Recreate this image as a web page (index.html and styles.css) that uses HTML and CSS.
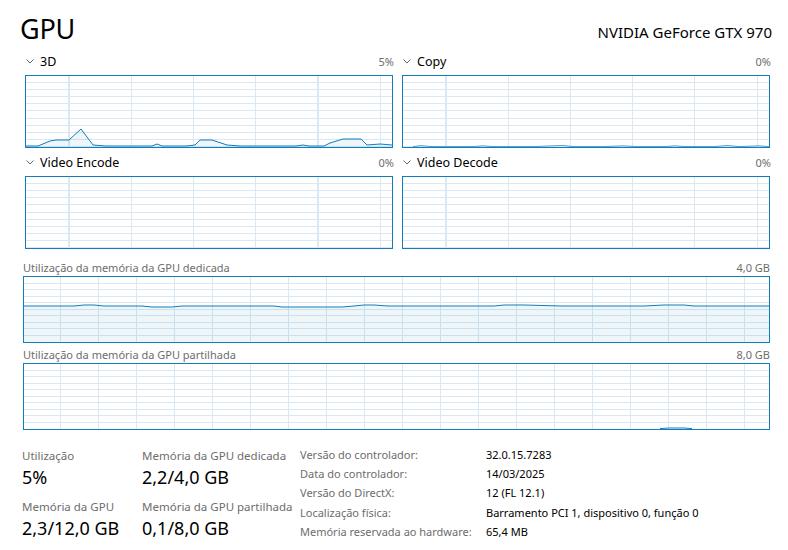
FILE: index.html
```html
<!DOCTYPE html>
<html lang="pt">
<head>
<meta charset="utf-8">
<title>GPU</title>
<link rel="stylesheet" href="styles.css">
</head>
<body>
<div class="page">
  <header class="header">
    <h1 class="title">GPU</h1>
    <div class="device">NVIDIA GeForce GTX 970</div>
  </header>

  <section class="engines">
    <div class="engine">
      <div class="engine-head">
        <span class="eng-name"><svg class="chev" viewBox="0 0 8 5" width="8" height="5"><path d="M0.5 0.5 L4 4 L7.5 0.5" fill="none" stroke="#666" stroke-width="1"/></svg>3D</span>
        <span class="pct">5%</span>
      </div>
      <div class="graph small">
        <svg class="plot" viewBox="0 0 366 71" preserveAspectRatio="none">
          <polygon class="fill" points="0,71 0,70 12,70 24,65 30,64 43,64 55,53 67,69 80,70 126,70 131,68 136,70 160,70 169,69 174,64 186,64 201,69 214,70 270,70 277,69 283,70 298,70 304,67 317,63 335,63 341,69 354,68 366,69 366,71"/>
          <polyline class="line" points="0,70 12,70 24,65 30,64 43,64 55,53 67,69 80,70 126,70 131,68 136,70 160,70 169,69 174,64 186,64 201,69 214,70 270,70 277,69 283,70 298,70 304,67 317,63 335,63 341,69 354,68 366,69"/>
        </svg>
      </div>
    </div>
    <div class="engine">
      <div class="engine-head">
        <span class="eng-name"><svg class="chev" viewBox="0 0 8 5" width="8" height="5"><path d="M0.5 0.5 L4 4 L7.5 0.5" fill="none" stroke="#666" stroke-width="1"/></svg>Copy</span>
        <span class="pct">0%</span>
      </div>
      <div class="graph small">
        <svg class="plot" viewBox="0 0 366 71" preserveAspectRatio="none">
          <polyline class="line thin" points="10,70.6 18,69.6 28,70.6 70,70.6 80,69.8 90,70.6 130,70.6 160,69.4 170,70.6 200,70.6 220,69.8 234,70.6 262,70.6 272,69.8 282,70.6 312,70.6 324,69.4 336,70.6 356,69.8 366,70.6"/>
        </svg>
      </div>
    </div>
    <div class="engine">
      <div class="engine-head">
        <span class="eng-name"><svg class="chev" viewBox="0 0 8 5" width="8" height="5"><path d="M0.5 0.5 L4 4 L7.5 0.5" fill="none" stroke="#666" stroke-width="1"/></svg>Video Encode</span>
        <span class="pct">0%</span>
      </div>
      <div class="graph small"></div>
    </div>
    <div class="engine">
      <div class="engine-head">
        <span class="eng-name"><svg class="chev" viewBox="0 0 8 5" width="8" height="5"><path d="M0.5 0.5 L4 4 L7.5 0.5" fill="none" stroke="#666" stroke-width="1"/></svg>Video Decode</span>
        <span class="pct">0%</span>
      </div>
      <div class="graph small"></div>
    </div>
  </section>

  <section class="memory">
    <div class="mem-head">
      <span>Utilização da memória da GPU dedicada</span>
      <span>4,0 GB</span>
    </div>
    <div class="graph wide">
      <svg class="plot" viewBox="0 0 745 65" preserveAspectRatio="none">
        <polygon class="fill" points="0,65 0,29 50,29 60,28 70,28 80,29 118,29 128,30 148,30 158,29 250,29 258,30 300,30 318,30 330,29 340,28 350,28 364,29 470,29 480,28 500,28 538,29 560,29 620,29 640,28 660,28 670,29 745,29 745,65"/>
        <polyline class="line" points="0,29 50,29 60,28 70,28 80,29 118,29 128,30 148,30 158,29 250,29 258,30 300,30 318,30 330,29 340,28 350,28 364,29 470,29 480,28 500,28 538,29 560,29 620,29 640,28 660,28 670,29 745,29"/>
      </svg>
    </div>
    <div class="mem-head">
      <span>Utilização da memória da GPU partilhada</span>
      <span>8,0 GB</span>
    </div>
    <div class="graph wide">
      <svg class="plot" viewBox="0 0 745 65" preserveAspectRatio="none">
        <polyline class="line" points="636,64.6 645,64 660,64 668,64.6"/>
      </svg>
    </div>
  </section>

  <section class="stats">
    <div class="kpis">
      <div class="kpi">
        <div class="k-label">Utilização</div>
        <div class="k-value">5%</div>
      </div>
      <div class="kpi">
        <div class="k-label">Memória da GPU dedicada</div>
        <div class="k-value">2,2/4,0 GB</div>
      </div>
      <div class="kpi">
        <div class="k-label">Memória da GPU</div>
        <div class="k-value">2,3/12,0 GB</div>
      </div>
      <div class="kpi">
        <div class="k-label">Memória da GPU partilhada</div>
        <div class="k-value">0,1/8,0 GB</div>
      </div>
    </div>
    <dl class="props">
      <dt>Versão do controlador:</dt><dd>32.0.15.7283</dd>
      <dt>Data do controlador:</dt><dd>14/03/2025</dd>
      <dt>Versão do DirectX:</dt><dd>12 (FL 12.1)</dd>
      <dt>Localização física:</dt><dd>Barramento PCI 1, dispositivo 0, função 0</dd>
      <dt>Memória reservada ao hardware:</dt><dd>65,4 MB</dd>
    </dl>
  </section>
</div>
</body>
</html>
```

FILE: styles.css
```css
html, body {
  margin: 0;
  padding: 0;
  background: #ffffff;
}

body {
  font-family: "Noto Sans", "Open Sans", "DejaVu Sans", sans-serif;
  color: #000;
  width: 788px;
  height: 550px;
  overflow: hidden;
}

.page {
  padding: 0 18px 0 20px;
}

.header {
  display: flex;
  justify-content: space-between;
  align-items: flex-end;
  height: 44px;
}

.title {
  margin: 0;
  font-size: 27px;
  font-weight: 400;
  line-height: 30px;
  letter-spacing: -0.2px;
}

.device {
  font-size: 15px;
  line-height: 20px;
  margin-bottom: 2px;
  margin-right: -2px;
}

.engines {
  display: grid;
  grid-template-columns: 368px 368px;
  column-gap: 9px;
  row-gap: 2px;
  margin-left: 5px;
  margin-top: 5px;
}

.engine-head {
  display: flex;
  justify-content: space-between;
  align-items: flex-start;
  height: 23px;
  line-height: 20px;
  margin-top: 3px;
}

.eng-name {
  display: flex;
  align-items: center;
  height: 20px;
  font-size: 12.5px;
  margin-left: 1px;
}

.chev {
  margin-right: 6px;
  margin-top: -2px;
}

.pct {
  font-size: 11px;
  color: #6d6d6d;
  margin-right: -1px;
}

.graph {
  position: relative;
  border: 1px solid #117dbb;
  box-sizing: border-box;
  background-color: #fff;
}

.graph.small {
  height: 73px;
  background-image:
    linear-gradient(to right, transparent 42.5px, #d9e8f3 42.5px 44px, transparent 44px 104.7px, #d9e8f3 104.7px 106.2px, transparent 106.2px 166.7px, #d9e8f3 166.7px 168.2px, transparent 168.2px 228.8px, #d9e8f3 228.8px 230.3px, transparent 230.3px 291px, #d9e8f3 291px 292.5px, transparent 292.5px 353.5px, #d9e8f3 353.5px 355px, transparent 355px),
    repeating-linear-gradient(to bottom, transparent 0 6.1px, #d9e8f3 6.1px 7.1px);
  background-size: 366px 71px, 366px 71px;
}

.plot {
  position: absolute;
  inset: 0;
  width: 100%;
  height: 100%;
  display: block;
}

.fill {
  fill: #117dbb;
  fill-opacity: 0.07;
  stroke: none;
}

.line {
  fill: none;
  stroke: #117dbb;
  stroke-width: 1;
  vector-effect: non-scaling-stroke;
}

.line.thin {
  stroke-opacity: 0.7;
}

.memory {
  margin-left: 3px;
  width: 747px;
  margin-top: 9px;
}

.mem-head {
  display: flex;
  justify-content: space-between;
  align-items: center;
  height: 18px;
  font-size: 11px;
  color: #6d6d6d;
  margin-top: 2px;
}

.graph.wide {
  height: 67px;
  background-image:
    repeating-linear-gradient(to right, transparent 0 37px, #d9e8f3 37px 38.5px, transparent 38.5px 38px),
    repeating-linear-gradient(to bottom, transparent 0 5.6px, #d9e8f3 5.6px 6.55px);
  background-size: 38px 100%, 100% 65px;
  background-position: -1px 0, 0 0;
}

.stats {
  display: flex;
  margin-top: 17px;
  margin-left: 2px;
}

.kpis {
  display: grid;
  grid-template-columns: 120px 158px;
  row-gap: 8px;
  margin-top: 1px;
}

.k-label {
  font-size: 11.5px;
  color: #6d6d6d;
  line-height: 16px;
}

.k-value {
  font-size: 18px;
  line-height: 27px;
}

.props {
  display: grid;
  grid-template-columns: 186px auto;
  margin: -1px 0 0 0;
  font-size: 11px;
  line-height: 18.3px;
}

.props dt {
  color: #6d6d6d;
}

.props dd {
  margin: 0;
  color: #000;
}
```
